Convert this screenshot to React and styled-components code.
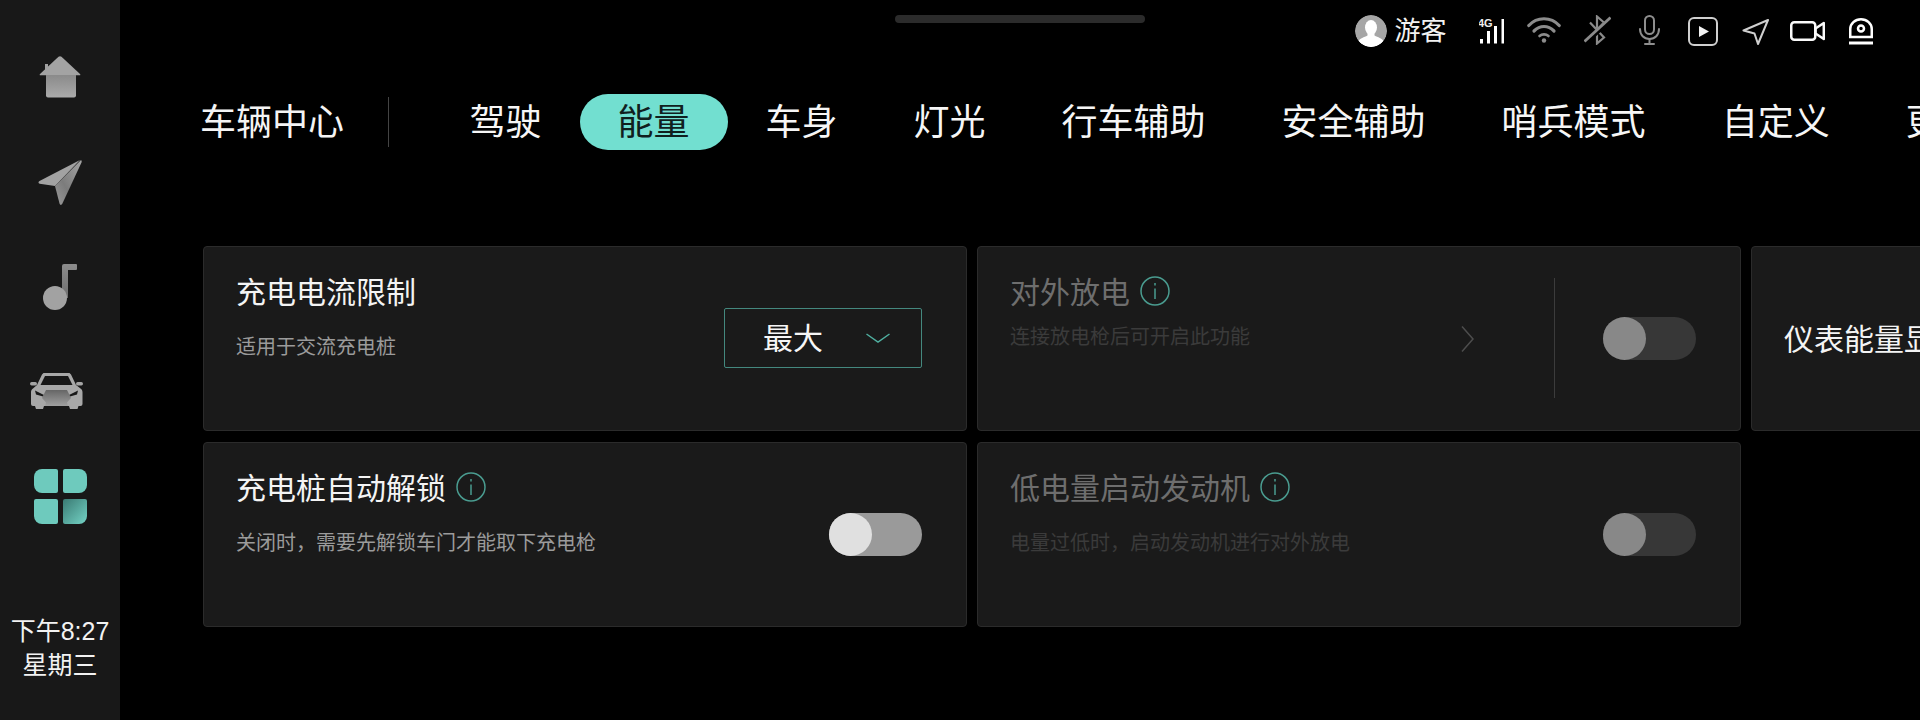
import React from "react";
import styled, { createGlobalStyle } from "styled-components";

const Global = createGlobalStyle`
  html, body { margin: 0; padding: 0; background: #000; width: 1920px; height: 720px; overflow: hidden; }
  body { font-family: "Noto Sans CJK SC", "Noto Sans", sans-serif; color: #fff; }
  * { box-sizing: border-box; }
`;

const Shell = styled.div`
  display: flex; width: 1920px; height: 720px; overflow: hidden; position: relative; background: #000;
`;
const Sidebar = styled.aside`
  flex: 0 0 120px; background: #181818; display: flex; flex-direction: column; align-items: center; padding-top: 24px;
`;
const NavSlot = styled.div`
  height: 105px; display: flex; align-items: center; justify-content: center; width: 100%; flex: none;
  padding-right: ${p => p.$nudge || "0"};
`;
const Clock = styled.div`
  margin-top: 65px; font-size: 25px; line-height: 34px; text-align: center; color: #f2f2f2; font-family: "Liberation Sans", "Noto Sans CJK SC", sans-serif; white-space: nowrap;
`;
const Main = styled.main`
  flex: 1; min-width: 0; display: flex; flex-direction: column; padding-top: 15px;
`;
const Handle = styled.div`
  position: absolute; left: 895px; top: 15px; width: 250px; height: 8px; border-radius: 4px; background: #2b2b2b;
`;
const StatusBar = styled.header`
  display: flex; justify-content: flex-end; align-items: center; height: 32px; padding-right: 33px;
`;
const Avatar = styled.div`
  width: 32px; height: 32px; border-radius: 50%; overflow: hidden; flex: none; margin-right: 7px; display: flex;
`;
const UserName = styled.span`
  font-size: 26px; line-height: 32px; color: #f2f2f2; margin-right: 19px; margin-top: -5px;
`;
const StatusSlot = styled.div`
  width: 52.7px; height: 32px; display: flex; align-items: center; justify-content: center; flex: none;
`;
const TabsRow = styled.nav`
  display: flex; align-items: center; height: 56px; margin-top: 47px; padding-left: 80px; white-space: nowrap;
`;
const Heading = styled.div`
  font-size: 36px; line-height: 51px; height: 56px; color: #f4f4f4; flex: none;
`;
const HeadDivider = styled.div`
  width: 1px; height: 50px; background: #444; margin: 0 42.5px 0 44px; flex: none;
`;
const Tabs = styled.div`
  display: flex; flex: none;
`;
const Tab = styled.div`
  flex: none; padding: 0 38px; height: 56px; line-height: 51px; font-size: 36px; border-radius: 28px;
  color: ${p => (p.$active ? "#10201e" : "#f6f6f6")};
  background: ${p => (p.$active ? "#72dfd0" : "transparent")};
`;
const Cards = styled.section`
  display: grid; grid-template-columns: repeat(3, 764px); grid-auto-rows: 185px; column-gap: 10px; row-gap: 11px;
  margin: 96px 0 0 83px;
`;
const Card = styled.article`
  display: flex; align-items: center; background: #1a1a1a; border: 1px solid #2b2b2b; border-radius: 4px;
  padding: 0 44px 0 32px; min-width: 0; overflow: hidden;
`;
const TextBlock = styled.div`
  align-self: flex-start; padding-top: 23px; min-width: 0;
`;
const TitleRow = styled.div`
  display: flex; align-items: center; gap: 10px; height: 42px;
`;
const Title = styled.div`
  font-size: 30px; line-height: 42px; margin-top: -3px; white-space: nowrap; color: ${p => (p.$dim ? "#6e6e6e" : "#f4f4f4")};
`;
const Sub = styled.div`
  font-size: 20px; line-height: 28px; white-space: nowrap;
  margin-top: ${p => (p.$raised ? "10px" : "20px")};
  color: ${p => (p.$dim ? "#3b3b3b" : "#9b9b9b")};
`;
const Single = styled.div`
  font-size: 30px; line-height: 42px; margin-top: -3px; color: #f4f4f4; white-space: nowrap;
`;
const Dropdown = styled.div`
  margin: -2px 0 0 auto; width: 198px; height: 60px; border: 1px solid #44887e; border-radius: 2px;
  display: flex; align-items: center; padding: 0 31px 0 38px; justify-content: space-between; flex: none;
`;
const DropText = styled.span`
  font-size: 30px; line-height: 40px; margin-top: -4px; color: #f6f6f6;
`;
const Toggle = styled.div`
  width: 93px; height: 43px; border-radius: 22px; flex: none; position: relative;
  margin-left: ${p => p.$ml || "auto"};
  background: ${p => (p.$dim ? "#373737" : "#9a9a9a")};
`;
const Knob = styled.div`
  position: absolute; left: 0; top: 0; width: 43px; height: 43px; border-radius: 50%;
  background: ${p => (p.$dim ? "#888888" : "#e0e0e0")};
`;
const ChevronWrap = styled.div`
  margin-left: auto; display: flex; flex: none;
`;
const VDivider = styled.div`
  width: 1px; height: 120px; margin-top: -1px; background: #3c3c3c; margin-left: 80px; flex: none;
`;

const HomeIcon = () => (
  <svg width="42" height="42" viewBox="0 0 42 42">
    <defs><linearGradient id="hb" x1="0" y1="0" x2="0" y2="1"><stop offset="0" stopColor="#8a8a8a" /><stop offset="1" stopColor="#ababab" /></linearGradient></defs>
    <path d="M6 8h3v6H6z" fill="#a0a0a0" />
    <path d="M19.500 .8a2.400 2.400 0 0 1 3 0L41 18c.6.6.3 1.300-.5 1.300H1.500C.7 19.300.4 18.600 1 18z" fill="#a3a3a3" />
    <path d="M7 19h30v20.500a2 2 0 0 1-2 2H9a2 2 0 0 1-2-2z" fill="url(#hb)" />
  </svg>
);
const PlaneIcon = () => (
  <svg width="44" height="46" viewBox="0 0 44 46">
    <defs><linearGradient id="pb" x1="1" y1="0" x2="0" y2="1"><stop offset="0" stopColor="#a5a5a5" /><stop offset=".6" stopColor="#7c7c7c" /><stop offset="1" stopColor="#9a9a9a" /></linearGradient></defs>
    <path d="M42 1 1.500 22c-1.500 1-1.300 2.300.2 2.800L17 27z" fill="#a2a2a2" />
    <path d="M42.500 1.500 17 27l4.500 17.500c.5 1.800 2 1.800 2.800.3L43.500 3.500c.5-1.500 0-2.500-1-2z" fill="url(#pb)" />
  </svg>
);
const MusicIcon = () => (
  <svg width="34" height="46" viewBox="0 0 34 46">
    <defs><linearGradient id="mb" x1="0" y1="0" x2="0" y2="1"><stop offset="0" stopColor="#8c8c8c" /><stop offset="1" stopColor="#6f6f6f" /></linearGradient></defs>
    <path d="M19 2a2 2 0 0 1 2-2h12a1 1 0 0 1 1 1v4a1 1 0 0 1-1 1h-8v28h-6z" fill="url(#mb)" />
    <circle cx="12" cy="34" r="12" fill="#a2a2a2" />
  </svg>
);
const CarIcon = () => (
  <svg width="54" height="38" viewBox="0 0 54 38">
    <defs><linearGradient id="cb" x1="0" y1="0" x2="0" y2="1"><stop offset="0" stopColor="#666" /><stop offset="1" stopColor="#a0a0a0" /></linearGradient></defs>
    <rect x="0" y="9" width="7" height="3.500" rx="1.700" fill="#a5a5a5" />
    <rect x="46" y="9" width="7" height="3.500" rx="1.700" fill="#a5a5a5" />
    <path d="M12 1.500 13.500 0h26L41 1.500 46 12l4.500 3.500c1.500 1 2 2 2 4V31a2 2 0 0 1-2 2h-2l-1 3H40l-1-3H14l-1 3H6l-1-3H3a2 2 0 0 1-2-2V19.500c0-2 .5-3 2-4L7 12z" fill="#a8a8a8" />
    <path d="M15 3h23l4.500 9H10.500z" fill="#181818" />
    <path d="M5 17.500l9 4.500-1 1.500-7-2zM48 17.500l-9 4.500 1 1.500 7-2z" fill="#181818" />
    <path d="M16 17h21l4 8-4 4.500 1 3.500H15l1-3.500-4-4.500z" fill="url(#cb)" />
  </svg>
);
const GridIcon = () => (
  <svg width="53" height="55" viewBox="0 0 53 55">
    <defs><linearGradient id="gb" x1="0" y1="0" x2="1" y2="1"><stop offset="0" stopColor="#3a7a73" /><stop offset=".9" stopColor="#6ecabd" /></linearGradient></defs>
    <path d="M8 0h14a2 2 0 0 1 2 2v20a2 2 0 0 1-2 2H8a8 8 0 0 1-8-8V8a8 8 0 0 1 8-8z" fill="#6ecabd" />
    <path d="M31 0h14a8 8 0 0 1 8 8v8a8 8 0 0 1-8 8H31a2 2 0 0 1-2-2V2a2 2 0 0 1 2-2z" fill="#6ecabd" />
    <path d="M2 30h20a2 2 0 0 1 2 2v21a2 2 0 0 1-2 2H8a8 8 0 0 1-8-8V32a2 2 0 0 1 2-2z" fill="#6ecabd" />
    <path d="M31 30h20a2 2 0 0 1 2 2v15a8 8 0 0 1-8 8H31a2 2 0 0 1-2-2V32a2 2 0 0 1 2-2z" fill="url(#gb)" />
  </svg>
);

const AvatarIcon = () => (
  <svg width="32" height="32" viewBox="0 0 32 32">
    <circle cx="16" cy="16" r="16" fill="#a6a6a6" />
    <ellipse cx="16" cy="12.500" rx="6" ry="7.500" fill="#fff" />
    <path d="M12.500 18v2.500C9 22.500 5 23 3.500 26a16 16 0 0 0 25 0c-1.500-3-5.500-3.500-9-5.500V18z" fill="#fff" />
  </svg>
);
const SignalIcon = () => (
  <svg width="26" height="26" viewBox="0 0 26 26">
    <text x="-1" y="9" fontSize="11" fontWeight="700" fontFamily="Liberation Sans, sans-serif" fill="#eee">4G</text>
    <rect x="1" y="21" width="3" height="4.500" fill="#fff" />
    <rect x="8" y="13" width="3" height="12.500" fill="#fff" />
    <rect x="15" y="8" width="3" height="17.500" fill="#fff" />
    <rect x="22.500" y="1" width="2.500" height="24.500" fill="#fff" />
  </svg>
);
const WifiIcon = () => (
  <svg width="34" height="26" viewBox="0 0 34 26" fill="none" stroke="#8c8c8c" strokeWidth="3.200" strokeLinecap="round" style={{ margin: "-2px 2px 0 0" }}>
    <path d="M1.800 8.500C10 -.5 24 -.5 32.200 8.500" />
    <path d="M7 14C13 8 21 8 27 14" />
    <path d="M12.500 19c2.500-2.200 6.500-2.200 9 0" strokeWidth="2.600" />
    <circle cx="17" cy="23.500" r="2.200" fill="#8c8c8c" stroke="none" />
  </svg>
);
const BluetoothOffIcon = () => (
  <svg width="27" height="30" viewBox="0 0 27 30" fill="none" stroke="#8a8a8a" strokeWidth="2.200" style={{ marginTop: "-2px" }}>
    <path d="M6 7.500l14 15-7 6V1.500l7 6-14 15" />
    <path d="M0.500 28.500 26.500 4.500" stroke="#000" strokeWidth="5" />
    <path d="M0.500 26.500 26.500 2.500" strokeWidth="2.800" />
  </svg>
);
const MicIcon = () => (
  <svg width="21" height="30" viewBox="0 0 21 30" fill="none" stroke="#8e8e8e" strokeWidth="2" strokeLinecap="round" style={{ marginTop: "-2px" }}>
    <rect x="6" y="1" width="9" height="18" rx="4.500" />
    <path d="M1 14c0 6 4 10 9.500 10S20 20 20 14" />
    <path d="M10.500 24v5M6 29h9" />
  </svg>
);
const PlayIcon = () => (
  <svg width="30" height="29" viewBox="0 0 30 29" fill="none">
    <rect x="1" y="1" width="28" height="27" rx="5" stroke="#cfcfcf" strokeWidth="2" />
    <path d="M11 9l10 5.500L11 20z" fill="#f2f2f2" />
  </svg>
);
const NavIcon = () => (
  <svg width="27" height="26" viewBox="0 0 27 26" fill="none" style={{ marginTop: "1px" }}>
    <path d="M26 1 1.500 11.500 12.500 14.500 16 25z" stroke="#cfcfcf" strokeWidth="2" strokeLinejoin="round" />
  </svg>
);
const VideoIcon = () => (
  <svg width="35" height="20" viewBox="0 0 35 20" fill="none" stroke="#fafafa" strokeWidth="2.500" strokeLinejoin="round">
    <rect x="1.250" y="1.250" width="24" height="17.500" rx="3" />
    <path d="M25.500 7.500 33.800 2v16l-8.300-5.500z" />
  </svg>
);
const CameraIcon = () => (
  <svg width="24" height="27" viewBox="0 0 24 27" fill="none" stroke="#fff" strokeWidth="2.500">
    <path d="M1.250 19V11a10.750 9.750 0 0 1 21.500 0v8z" />
    <circle cx="12" cy="10.500" r="3" />
    <path d="M0 25h24" strokeWidth="3" />
  </svg>
);

const InfoIcon = () => (
  <svg width="30" height="30" viewBox="0 0 30 30" fill="none" stroke="#4a9c90" strokeWidth="1.500" style={{ flex: "none" }}>
    <circle cx="15" cy="15" r="14" />
    <path d="M15 12.500v10.500" />
    <path d="M15 7v2.500" />
  </svg>
);
const DownChevron = () => (
  <svg width="24" height="10" viewBox="0 0 24 10" fill="none" stroke="#4fae9f" strokeWidth="1.500">
    <path d="M0.500 1 12 9 23.500 1" />
  </svg>
);
const RightChevron = () => (
  <svg width="13" height="26" viewBox="0 0 13 26" fill="none" stroke="#4d4d4d" strokeWidth="1.500">
    <path d="M1 0.500 12 13 1 25.500" />
  </svg>
);

const tabs = ["驾驶", "能量", "车身", "灯光", "行车辅助", "安全辅助", "哨兵模式", "自定义", "更多"];

export default function App() {
  return (
    <>
      <Global />
      <Shell>
        <Sidebar>
          <NavSlot><HomeIcon /></NavSlot>
          <NavSlot><PlaneIcon /></NavSlot>
          <NavSlot><MusicIcon /></NavSlot>
          <NavSlot $nudge="7px"><CarIcon /></NavSlot>
          <NavSlot><GridIcon /></NavSlot>
          <Clock>下午8:27<br />星期三</Clock>
        </Sidebar>
        <Main>
          <StatusBar>
            <Avatar><AvatarIcon /></Avatar>
            <UserName>游客</UserName>
            <StatusSlot><SignalIcon /></StatusSlot>
            <StatusSlot><WifiIcon /></StatusSlot>
            <StatusSlot><BluetoothOffIcon /></StatusSlot>
            <StatusSlot><MicIcon /></StatusSlot>
            <StatusSlot><PlayIcon /></StatusSlot>
            <StatusSlot><NavIcon /></StatusSlot>
            <StatusSlot><VideoIcon /></StatusSlot>
            <StatusSlot><CameraIcon /></StatusSlot>
          </StatusBar>
          <TabsRow>
            <Heading>车辆中心</Heading>
            <HeadDivider />
            <Tabs>
              {tabs.map(t => <Tab key={t} $active={t === "能量"}>{t}</Tab>)}
            </Tabs>
          </TabsRow>
          <Cards>
            <Card>
              <TextBlock>
                <TitleRow><Title>充电电流限制</Title></TitleRow>
                <Sub>适用于交流充电桩</Sub>
              </TextBlock>
              <Dropdown><DropText>最大</DropText><DownChevron /></Dropdown>
            </Card>
            <Card>
              <TextBlock>
                <TitleRow><Title $dim>对外放电</Title><InfoIcon /></TitleRow>
                <Sub $dim $raised>连接放电枪后可开启此功能</Sub>
              </TextBlock>
              <ChevronWrap><RightChevron /></ChevronWrap>
              <VDivider />
              <Toggle $dim $ml="48px"><Knob $dim /></Toggle>
            </Card>
            <Card><Single>仪表能量显示</Single></Card>
            <Card>
              <TextBlock>
                <TitleRow><Title>充电桩自动解锁</Title><InfoIcon /></TitleRow>
                <Sub>关闭时，需要先解锁车门才能取下充电枪</Sub>
              </TextBlock>
              <Toggle><Knob /></Toggle>
            </Card>
            <Card>
              <TextBlock>
                <TitleRow><Title $dim>低电量启动发动机</Title><InfoIcon /></TitleRow>
                <Sub $dim>电量过低时，启动发动机进行对外放电</Sub>
              </TextBlock>
              <Toggle $dim><Knob $dim /></Toggle>
            </Card>
          </Cards>
        </Main>
        <Handle />
      </Shell>
    </>
  );
}
